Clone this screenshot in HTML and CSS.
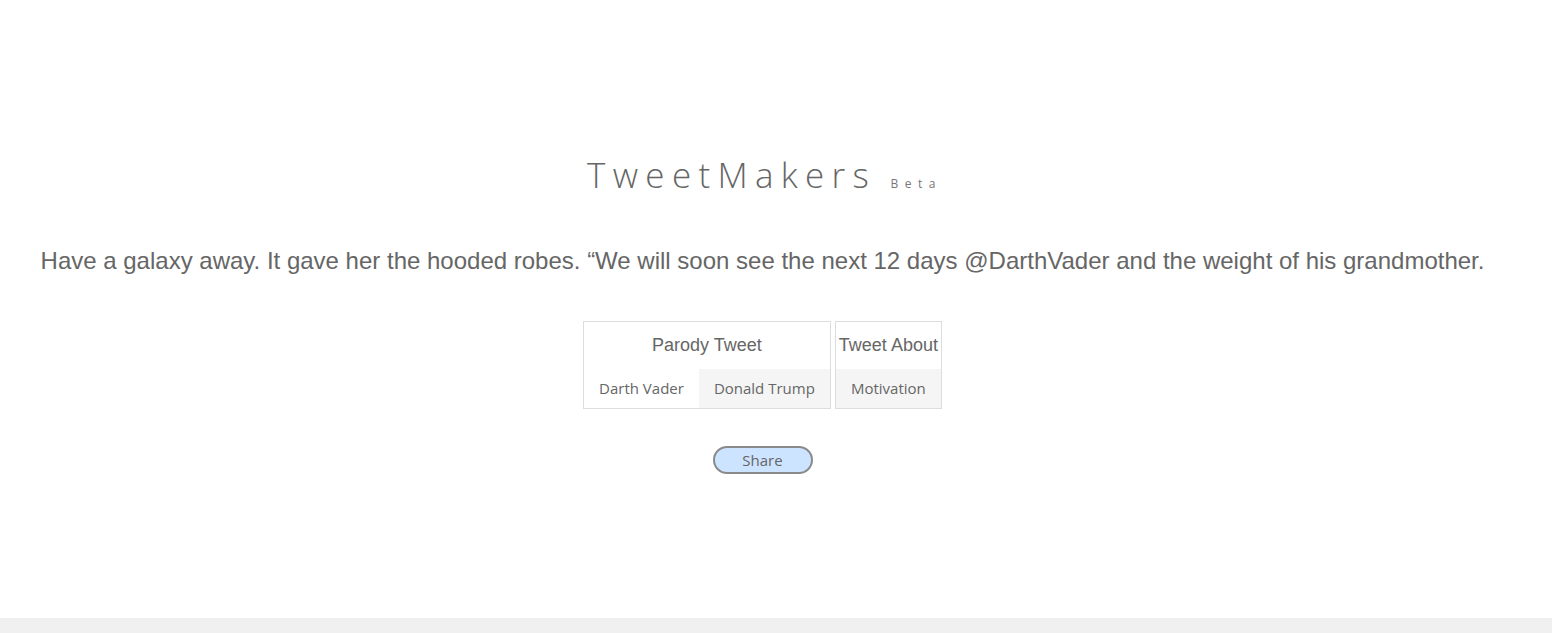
FILE: index.html
```html
<!DOCTYPE html>
<html>
<head>
<meta charset="utf-8">
<link rel="stylesheet" href="styles.css">
</head>
<body>
<div class="page">
  <main class="main">
    <h1 class="title">TweetMakers <span class="beta">Beta</span></h1>
    <p class="tweet">Have a galaxy away. It gave her the hooded robes. “We will soon see the next 12 days @DarthVader and the weight of his grandmother.</p>
    <div class="groups">
      <div class="group">
        <div class="group-head">Parody Tweet</div>
        <div class="options">
          <div class="opt">Darth Vader</div>
          <div class="opt active">Donald Trump</div>
        </div>
      </div>
      <div class="group">
        <div class="group-head">Tweet About</div>
        <div class="options">
          <div class="opt active">Motivation</div>
        </div>
      </div>
    </div>
    <div class="share-row"><button class="share">Share</button></div>
  </main>
  <footer class="footer"></footer>
</div>
</body>
</html>
```

FILE: styles.css
```css
html, body {
  margin: 0;
  padding: 0;
  background: #fff;
}
.page {
  height: 633px;
  display: flex;
  flex-direction: column;
}
.main {
  flex: 1;
  display: flex;
  flex-direction: column;
  align-items: center;
  padding-top: 150px;
  padding-right: 27px;
}
.title {
  margin: 0;
  padding-left: 4px;
  font-family: "Open Sans", sans-serif;
  font-weight: 300;
  font-size: 35px;
  line-height: 50px;
  letter-spacing: 7.3px;
  color: #666;
}
.beta {
  font-size: 12px;
  letter-spacing: 6.5px;
  font-weight: 400;
  color: #777;
  margin-left: -2px;
}
.tweet {
  margin: 38px 0 0;
  font-family: "Liberation Sans", Arial, sans-serif;
  font-size: 24px;
  line-height: 28px;
  color: #666;
  text-align: center;
}
.groups {
  display: flex;
  gap: 4px;
  margin-top: 46px;
}
.group {
  border: 1px solid #ddd;
  display: flex;
  flex-direction: column;
}
.group-head {
  font-family: "Liberation Sans", Arial, sans-serif;
  font-size: 18px;
  color: #666;
  text-align: center;
  height: 47px;
  line-height: 47px;
  padding: 0 3px;
  white-space: nowrap;
}
.options {
  display: flex;
  height: 39px;
}
.opt {
  flex: 1 0 auto;
  font-family: "Open Sans", sans-serif;
  font-size: 15px;
  color: #666;
  line-height: 39px;
  padding: 0 15px;
  text-align: center;
  white-space: nowrap;
}
.opt.active {
  background: #f5f5f5;
}
.share-row {
  margin-top: 37px;
}
.share {
  width: 100px;
  height: 28px;
  border: 2px solid #8a8a8a;
  border-radius: 14px;
  background: #cce4ff;
  font-family: "Open Sans", sans-serif;
  font-size: 15px;
  color: #666;
  padding: 0;
}
.footer {
  height: 15px;
  background: #f0f0f0;
}
```
